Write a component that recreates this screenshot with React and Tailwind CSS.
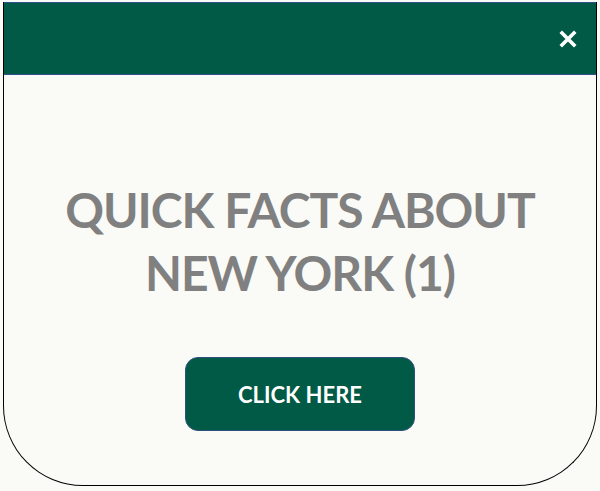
export default function App() {
  return (
    <div className="w-[600px] h-[491px] bg-[#fafaf6] pt-[2px] px-[3px] font-['Lato','Open_Sans',sans-serif]">
      <div className="h-[484px] flex flex-col border-x border-b border-black rounded-b-[80px] overflow-hidden">
        <div className="h-[73px] shrink-0 bg-[#005a46] border border-[#2f4f8f] -mx-px flex items-start justify-end pr-[19px] pt-[27px]">
          <svg width="18" height="18" viewBox="0 0 18 18" className="block">
            <path d="M3 3L15 15M15 3L3 15" stroke="#fff" strokeWidth="3.6" strokeLinecap="square" />
          </svg>
        </div>
        <div className="flex-1 flex flex-col items-center pt-[103px]">
          <h1 className="text-[#808080] font-bold text-[48px] leading-[63px] text-center tracking-[-1px]">
            QUICK FACTS ABOUT<br />NEW YORK (1)
          </h1>
          <button className="mt-[53px] w-[230px] h-[74px] rounded-[13px] bg-[#005a46] border border-[#2f4f7f] text-white font-bold text-[22px]">
            CLICK HERE
          </button>
        </div>
      </div>
    </div>
  );
}
